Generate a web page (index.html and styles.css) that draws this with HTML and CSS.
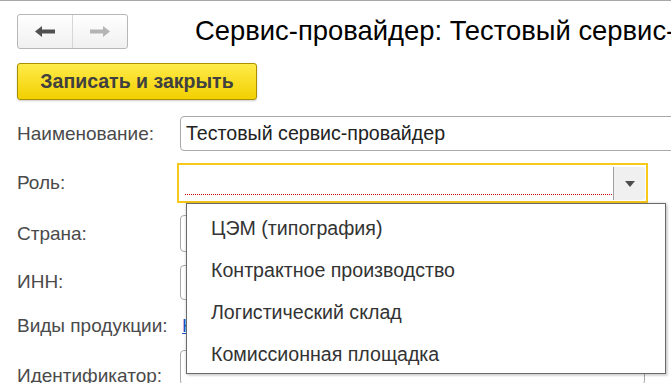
FILE: index.html
```html
<!DOCTYPE html>
<html lang="ru">
<head>
<meta charset="utf-8">
<title>Сервис-провайдер</title>
<link rel="stylesheet" href="styles.css">
</head>
<body>
<div class="page">
  <div class="toolbar">
    <div class="nav">
      <button class="nav-btn back" type="button" aria-label="Назад">
        <svg width="20" height="11" viewBox="0 0 20 11"><path d="M0 5.5 L7 0 V3.5 H20 V7.5 H7 V11 Z" fill="#505050"/></svg>
      </button>
      <button class="nav-btn fwd" type="button" aria-label="Вперёд">
        <svg width="20" height="11" viewBox="0 0 20 11"><path d="M20 5.5 L13 0 V3.5 H0 V7.5 H13 V11 Z" fill="#b4b4b4"/></svg>
      </button>
    </div>
    <h1 class="title">Сервис-провайдер: Тестовый сервис-провайдер</h1>
  </div>
  <div class="cmdbar">
    <button class="btn-primary" type="button">Записать и закрыть</button>
  </div>
  <div class="form">
    <div class="label r1">Наименование:</div>
    <div class="field r1"><div class="input wide">Тестовый сервис-провайдер</div></div>

    <div class="label r2">Роль:</div>
    <div class="field r2">
      <div class="focus-frame">
        <div class="input combo">
          <div class="combo-text"></div>
          <div class="combo-btn"><span class="tri"></span></div>
        </div>
      </div>
    </div>

    <div class="label r3">Страна:</div>
    <div class="field r3"><div class="input tall"></div></div>

    <div class="label r4">ИНН:</div>
    <div class="field r4"><div class="input"></div></div>

    <div class="label r5">Виды продукции:</div>
    <div class="field r5"><a class="link" href="#">Не заполнено</a></div>

    <div class="label r6">Идентификатор:</div>
    <div class="field r6"><div class="input"></div></div>

    <ul class="dropdown">
      <li>ЦЭМ (типография)</li>
      <li>Контрактное производство</li>
      <li>Логистический склад</li>
      <li>Комиссионная площадка</li>
    </ul>
  </div>
</div>
</body>
</html>
```
FILE: styles.css
```css
* { box-sizing: border-box; }
html, body { margin: 0; padding: 0; background: #fff; }
body {
  font-family: "Liberation Sans", Arial, sans-serif;
  width: 671px;
  height: 383px;
  overflow: hidden;
}
.page {
  border-top: 1px solid #a8a8a8;
  height: 383px;
  overflow: hidden;
  position: relative;
}
.toolbar {
  display: flex;
  align-items: center;
  padding: 12px 0 0 17px;
  height: 48px;
  white-space: nowrap;
}
.nav {
  display: flex;
  width: 111px;
  height: 35px;
  border: 1px solid #b7b7b7;
  border-radius: 3px;
  background: linear-gradient(#ffffff, #f0f0f0);
  flex: none;
}
.nav-btn {
  flex: 1;
  border: 0;
  background: transparent;
  display: flex;
  align-items: center;
  justify-content: center;
  padding: 0;
}
.nav-btn.back { border-right: 1px solid #d6d6d6; }
.title {
  margin: 0 0 0 67px;
  font-weight: normal;
  font-size: 27.4px;
  color: #000;
  line-height: 1;
}
.cmdbar {
  padding: 14px 0 0 17px;
}
.btn-primary {
  display: block;
  width: 240px;
  height: 37px;
  border: 1px solid #a89000;
  border-radius: 3px;
  background: linear-gradient(#ffeb4a, #f2d000);
  font-family: "Liberation Sans", Arial, sans-serif;
  font-weight: bold;
  font-size: 19.5px;
  color: #404040;
  padding: 0;
  box-shadow: 0 1px 2px rgba(0,0,0,0.2);
}
.form {
  position: relative;
  display: grid;
  grid-template-columns: 163px 1fr;
  grid-template-rows: 35px 40px 37px 36px 28px 56px;
  row-gap: 12px;
  align-items: center;
  padding: 16px 0 0 17px;
}
.label {
  font-size: 19px;
  color: #4a4a4a;
  white-space: nowrap;
}
.label.r6 { align-self: start; padding-top: 13px; }
.field.r6 { align-self: start; margin-top: -2px; }
.field { min-width: 0; }
.input {
  height: 35px;
  border: 1px solid #a9a9a9;
  border-radius: 4px;
  background: #fff;
  font-size: 19.6px;
  color: #333;
  padding: 5px 5px;
  width: 465px;
  white-space: nowrap;
  overflow: hidden;
}
.input.wide { width: 520px; color: #222; }
.input.tall { height: 37px; }
.focus-frame {
  margin-left: -3px;
  width: 471px;
  height: 40px;
  border: 2px solid #f7c919;
  padding: 1px;
}
.input.combo {
  border: 0;
  border-radius: 0;
  height: 34px;
  width: 100%;
  display: flex;
  padding: 0;
}
.combo-text {
  flex: 1;
  margin: 0 1px 0 5px;
  border-bottom: 1px dotted #d00000;
  height: 29px;
}
.combo-btn {
  width: 32px;
  height: 33px;
  margin-top: 1px;
  background: #f0f0f0;
  border-left: 1px solid #a0a0a0;
  border-radius: 0 3px 3px 0;
  display: flex;
  align-items: center;
  justify-content: center;
}
.tri {
  width: 0;
  height: 0;
  border-left: 5px solid transparent;
  border-right: 5px solid transparent;
  border-top: 6px solid #4d4d4d;
}
.link {
  display: inline-block;
  margin-left: 2px;
  font-size: 19px;
  color: #1a52c8;
  text-decoration: underline;
  white-space: nowrap;
}
.dropdown {
  position: absolute;
  left: 186px;
  top: 103px;
  width: 480px;
  height: 171px;
  margin: 0;
  padding: 3px 0 0 0;
  list-style: none;
  background: #fff;
  border: 1px solid #6a6a6a;
  box-shadow: 0 0 2px 1px rgba(0,0,0,0.10), 2px 2px 2px rgba(0,0,0,0.12);
}
.dropdown li {
  height: 42px;
  line-height: 42px;
  padding-left: 24px;
  font-size: 19.6px;
  color: #333;
  white-space: nowrap;
}
```
